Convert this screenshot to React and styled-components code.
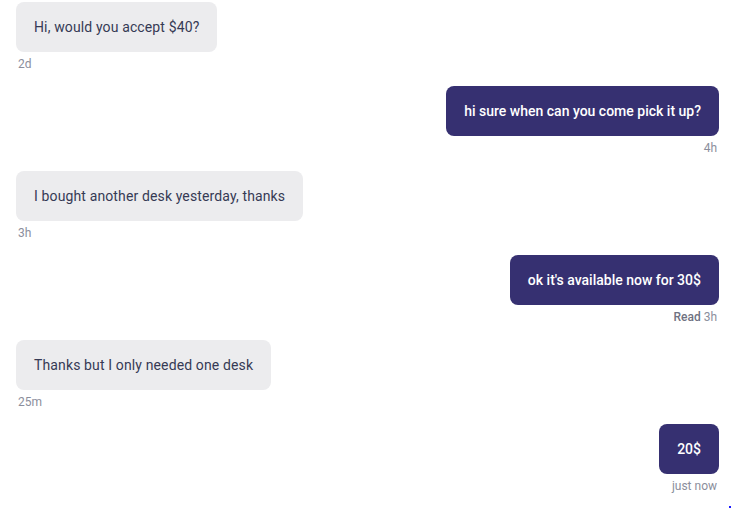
import React from "react";
import styled, { createGlobalStyle } from "styled-components";

const Global = createGlobalStyle`
  html, body { margin: 0; padding: 0; background: #fff; }
  body { font-family: Roboto, "Noto Sans", sans-serif; }
`;

const Thread = styled.div`
  position: relative;
  display: flex;
  flex-direction: column;
  padding: 2px 13px 0 16px;
  height: 509px;
  box-sizing: border-box;
`;

const Message = styled.div`
  display: flex;
  flex-direction: column;
  align-items: ${(p) => (p.$mine ? "flex-end" : "flex-start")};
  height: 84.4px;
`;

const Bubble = styled.div`
  box-sizing: border-box;
  height: 50px;
  display: flex;
  align-items: center;
  padding: 0 18px;
  border-radius: 8px;
  font-size: 14px;
  background: ${(p) => (p.$mine ? "#363071" : "#ececee")};
  color: ${(p) => (p.$mine ? "#ffffff" : "#363a55")};
  font-weight: ${(p) => (p.$mine ? 500 : 400)};
  letter-spacing: ${(p) => (p.$mine ? "0" : "0.13px")};
  white-space: nowrap;
`;

const Meta = styled.div`
  margin-top: 4px;
  font-size: 12px;
  line-height: 16px;
  color: #8b8e9c;
  padding: 0 2px;
`;

const Read = styled.span`
  font-weight: 500;
  color: #6f7282;
`;

const Dot = styled.span`
  position: absolute;
  right: 1px;
  bottom: 1px;
  width: 2px;
  height: 2px;
  background: #1a1aff;
`;

const messages = [
  { text: "Hi, would you accept $40?", time: "2d" },
  { text: "hi sure when can you come pick it up?", time: "4h", mine: true },
  { text: "I bought another desk yesterday, thanks", time: "3h" },
  { text: "ok it's available now for 30$", time: "3h", mine: true, read: true },
  { text: "Thanks but I only needed one desk", time: "25m" },
  { text: "20$", time: "just now", mine: true },
];

export default function App() {
  return (
    <>
      <Global />
      <Thread>
        {messages.map((m, i) => (
          <Message key={i} $mine={m.mine}>
            <Bubble $mine={m.mine}>{m.text}</Bubble>
            <Meta $mine={m.mine}>
              {m.read && <Read>Read </Read>}
              {m.time}
            </Meta>
          </Message>
        ))}
        <Dot />
      </Thread>
    </>
  );
}
